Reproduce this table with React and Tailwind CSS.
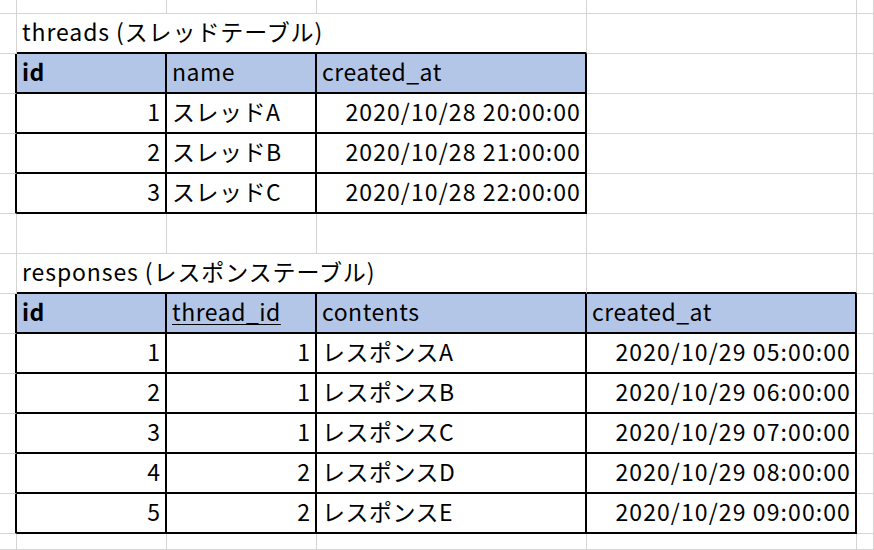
import React from 'react';

// column widths / row heights copied from the sheet
const colClass = 'grid-cols-[17px_150px_150px_270px_270px_1fr]';
const rowClass = 'grid-rows-[14px_repeat(13,40px)_16px]';

const threads = [
  ['1', 'スレッドA', '2020/10/28 20:00:00'],
  ['2', 'スレッドB', '2020/10/28 21:00:00'],
  ['3', 'スレッドC', '2020/10/28 22:00:00'],
];

const responses = [
  ['1', '1', 'レスポンスA', '2020/10/29 05:00:00'],
  ['2', '1', 'レスポンスB', '2020/10/29 06:00:00'],
  ['3', '1', 'レスポンスC', '2020/10/29 07:00:00'],
  ['4', '2', 'レスポンスD', '2020/10/29 08:00:00'],
  ['5', '2', 'レスポンスE', '2020/10/29 09:00:00'],
];

// cells: key "r-c" -> {text, right, bold, underline, head, span}
const cells = {};
cells['1-1'] = { text: 'threads (スレッドテーブル)', span: 3 };
cells['7-1'] = { text: 'responses (レスポンステーブル)', span: 3 };

['id', 'name', 'created_at'].forEach((t, i) => {
  cells[`2-${i + 1}`] = { text: t, head: true, bold: i === 0 };
});
threads.forEach((row, r) => {
  row.forEach((t, i) => {
    cells[`${r + 3}-${i + 1}`] = { text: t, right: i !== 1 };
  });
});

['id', 'thread_id', 'contents', 'created_at'].forEach((t, i) => {
  cells[`8-${i + 1}`] = { text: t, head: true, bold: i === 0, underline: i === 1 };
});
responses.forEach((row, r) => {
  row.forEach((t, i) => {
    cells[`${r + 9}-${i + 1}`] = { text: t, right: i !== 2 };
  });
});

function inTable(r, c) {
  if (r >= 2 && r <= 5 && c >= 1 && c <= 3) return true;
  if (r >= 8 && r <= 13 && c >= 1 && c <= 4) return true;
  return false;
}

function Cell({ r, c, info }) {
  const span = info && info.span ? info.span : 1;
  const lastC = c + span - 1;
  const blackR = inTable(r, lastC) || inTable(r, lastC + 1);
  let blackB = false;
  for (let k = c; k <= lastC; k++) {
    if (inTable(r, k) || inTable(r + 1, k)) blackB = true;
  }
  let align = 'pl-[5px] tracking-[0.5px]';
  if (info && info.right) align = 'justify-end pr-[4px] tracking-[1.1px]';
  if (span === 3) align = 'pl-[5px] tracking-[0.9px]';
  const cls = [
    'flex items-end overflow-visible whitespace-nowrap leading-none pb-[9px]',
    blackR ? 'border-r-2 border-r-black' : 'border-r border-r-[#d4d4d4]',
    blackB ? 'border-b-2 border-b-black' : 'border-b border-b-[#d4d4d4]',
    span === 3 ? 'col-span-3' : '',
    info && info.head ? 'bg-[#b4c6e7]' : 'bg-white',
    align,
  ].join(' ');
  return (
    <div className={cls}>
      {info && (
        <span className={`${info.bold ? 'font-bold' : ''} ${info.underline ? 'underline underline-offset-[3px] decoration-1' : ''}`}>
          {info.text}
        </span>
      )}
    </div>
  );
}

export default function App() {
  const out = [];
  for (let r = 0; r < 15; r++) {
    for (let c = 0; c < 6; c++) {
      // skip cells covered by a merged title
      if ((r === 1 || r === 7) && (c === 2 || c === 3)) continue;
      out.push(<Cell key={`${r}-${c}`} r={r} c={c} info={cells[`${r}-${c}`]} />);
    }
  }
  return (
    <div
      className={`grid ${colClass} ${rowClass} w-[874px] h-[550px] overflow-hidden bg-white text-black text-[23px] font-['Noto_Sans_CJK_JP',sans-serif]`}
    >
      {out}
    </div>
  );
}
